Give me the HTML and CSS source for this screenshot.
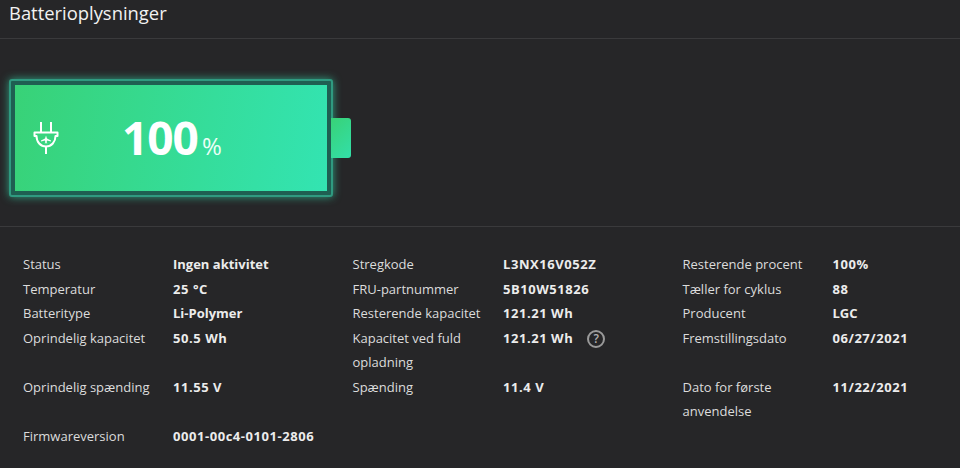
FILE: index.html
```html
<!DOCTYPE html>
<html lang="da">
<head>
  <meta charset="UTF-8" />
  <title>Batterioplysninger</title>
  <link rel="stylesheet" href="styles.css">
</head>
<body>
  <header class="page-header">
    <h1>Batterioplysninger</h1>
  </header>

  <section class="battery-section">
    <div class="battery">
      <div class="battery-body">
        <div class="battery-fill">
          <svg class="plug-icon" width="26" height="32" viewBox="0 0 26 32" fill="none" stroke="#fff" stroke-width="2">
            <path d="M8 0V10M18 0V10" />
            <path d="M1.5 10.5H24.5V14H22.5C22.5 20 18.5 24.5 13 24.5C7.5 24.5 3.5 20 3.5 14H1.5Z" stroke-linejoin="round" />
            <path d="M13 24.5V32" />
            <path d="M13 13.5L14 16.5L18 18.5V19.5L14 18.5L13.6 20.5L14.6 21.3H11.4L12.4 20.5L12 18.5L8 19.5V18.5L12 16.5Z" fill="#fff" stroke="none" />
          </svg>
          <div class="battery-level"><span class="level-num">100</span><span class="level-unit">%</span></div>
        </div>
      </div>
      <div class="battery-cap"></div>
    </div>
  </section>

  <section class="details">
    <span class="label">Status</span><span class="value">Ingen aktivitet</span>
    <span class="label">Stregkode</span><span class="value num">L3NX16V052Z</span>
    <span class="label">Resterende procent</span><span class="value num">100%</span>

    <span class="label">Temperatur</span><span class="value num">25 °C</span>
    <span class="label">FRU-partnummer</span><span class="value num">5B10W51826</span>
    <span class="label">Tæller for cyklus</span><span class="value num">88</span>

    <span class="label">Batteritype</span><span class="value">Li-Polymer</span>
    <span class="label">Resterende kapacitet</span><span class="value num">121.21 Wh</span>
    <span class="label">Producent</span><span class="value">LGC</span>

    <span class="label">Oprindelig kapacitet</span><span class="value num">50.5 Wh</span>
    <span class="label">Kapacitet ved fuld opladning</span>
    <span class="value num">121.21 Wh<span class="help">?</span></span>
    <span class="label">Fremstillingsdato</span><span class="value num">06/27/2021</span>

    <span class="label">Oprindelig spænding</span><span class="value num">11.55 V</span>
    <span class="label">Spænding</span><span class="value num">11.4 V</span>
    <span class="label">Dato for første anvendelse</span><span class="value num">11/22/2021</span>

    <span class="label">Firmwareversion</span><span class="value num">0001-00c4-0101-2806</span>
  </section>
</body>
</html>
```

FILE: styles.css
```css
* {
  box-sizing: border-box;
}

html, body {
  height: 100%;
}

body {
  margin: 0;
  background-color: #262628;
  color: #e4e4e4;
  font-family: 'Open Sans', 'Noto Sans', sans-serif;
  overflow: hidden;
}

.page-header {
  height: 39px;
  padding: 1px 9px 0;
  border-bottom: 1px solid #3a3a3c;
}

.page-header h1 {
  margin: 0;
  font-size: 18.4px;
  line-height: 24px;
  font-weight: 400;
  color: #f2f2f2;
}

.battery-section {
  height: 188px;
  padding: 40px 0 0 9px;
  border-bottom: 1px solid #3a3a3c;
}

.battery {
  display: flex;
  align-items: center;
}

.battery-body {
  width: 324px;
  height: 118px;
  padding: 4px;
  border: 2px solid #2f9a80;
  border-radius: 3px;
  background-color: #1f5f52;
  box-shadow: 0 0 8px rgba(52, 211, 165, 0.7);
}

.battery-fill {
  height: 100%;
  display: flex;
  align-items: center;
  padding-left: 18px;
  background: linear-gradient(100deg, #38d277 0%, #33e4b2 100%);
}

.plug-icon {
  margin-top: 0;
}

.battery-level {
  margin-left: 63px;
  margin-top: -3px;
  color: #fff;
  display: flex;
  align-items: baseline;
  gap: 4px;
}

.level-num {
  font-size: 46px;
  line-height: 54px;
  font-weight: 700;
  letter-spacing: -1px;
}

.level-unit {
  font-size: 24px;
  font-weight: 400;
  color: #eafff6;
}

.battery-cap {
  width: 20px;
  height: 40px;
  margin-left: -2px;
  border-radius: 0 3px 3px 0;
  background: linear-gradient(135deg, #38d277 0%, #33dfa9 100%);
}

.details {
  display: grid;
  grid-template-columns: 150px 179.5px 150.5px 179.5px 150px 1fr;
  padding: 25px 0 0 23px;
  font-size: 13px;
  line-height: 24.5px;
}

.label {
  padding-right: 8px;
  color: #dcdcdc;
}

.value {
  font-weight: 700;
  color: #ececec;
}

.num {
  letter-spacing: 0.55px;
}

.help {
  display: inline-block;
  width: 18px;
  height: 18px;
  margin-left: 14px;
  border: 2px solid #9a9a9a;
  border-radius: 50%;
  color: #b0b0b0;
  font-size: 12px;
  line-height: 14px;
  letter-spacing: 0;
  text-align: center;
  font-weight: 600;
}
```
